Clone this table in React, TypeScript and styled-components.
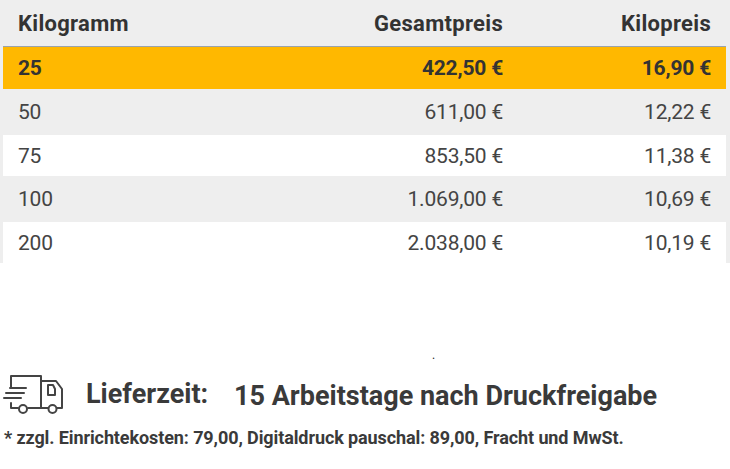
import React from 'react'
import styled, { createGlobalStyle } from 'styled-components'

const GlobalStyle = createGlobalStyle`
    body {
        margin: 0;
        background: #fff;
        font-family: Roboto, "Liberation Sans", sans-serif;
        color: #3b3b3b;
    }
`

const PRICES = [
    { kg: '25', total: '422,50 €', perKg: '16,90 €' },
    { kg: '50', total: '611,00 €', perKg: '12,22 €' },
    { kg: '75', total: '853,50 €', perKg: '11,38 €' },
    { kg: '100', total: '1.069,00 €', perKg: '10,69 €' },
    { kg: '200', total: '2.038,00 €', perKg: '10,19 €' }
]

type Variant = 'head' | 'active' | 'odd' | 'even'

const HEIGHTS: Record<Variant, string> = { head: '46px', active: '42px', odd: '46px', even: '41px' }

const TableWrapper = styled.div`
    background: #eeeeee;
    padding: 0 4px 0 3px;
`

const Row = styled.div<{ $variant: Variant }>`
    display: grid;
    grid-template-columns: 1fr 200px 208px;
    align-items: center;
    padding: 0 15px;
    height: ${p => HEIGHTS[p.$variant]};
    font-size: ${p => (p.$variant === 'head' ? '22px' : '21px')};
    font-weight: ${p => (p.$variant === 'head' || p.$variant === 'active' ? 700 : 400)};
    background: ${p => (p.$variant === 'active' ? '#ffb800' : p.$variant === 'even' ? '#ffffff' : 'transparent')};
    border-bottom: ${p => (p.$variant === 'head' ? '1px solid #9aa3ac' : 'none')};
    color: ${p => (p.$variant === 'head' || p.$variant === 'active' ? '#333' : '#444')};
    letter-spacing: ${p => (p.$variant === 'head' ? '0.3px' : '-0.2px')};
`

const Cell = styled.div<{ $right?: boolean }>`
    text-align: ${p => (p.$right ? 'right' : 'left')};
`

const Spacer = styled.div`
    height: 98px;
    padding-left: 432px;
    display: flex;
    align-items: flex-end;
    font-size: 12px;
    line-height: 12px;
    color: #222;
`

const Delivery = styled.div`
    display: flex;
    align-items: center;
    padding: 12px 0 0 3px;
    font-weight: 700;
    font-size: 27px;
    color: #3a3a3a;
`

const Label = styled.span`
    margin-left: 21px;
    width: 148px;
`

const Value = styled.span`
    padding-top: 4px;
`

const Footnote = styled.div`
    margin: 12px 0 0 4px;
    font-size: 18px;
    font-weight: 700;
    color: #3a3a3a;
    letter-spacing: -0.1px;
`

const TruckIcon = () => (
    <svg width="62" height="42" viewBox="0 7 62 42" fill="none" stroke="#444" strokeWidth="2" strokeLinecap="round" strokeLinejoin="round">
        <path d="M8 22 V10 H38 V42" />
        <path d="M38 15 H53 L59 23 V42 H54" />
        <path d="M45 19 H50 L52 23 V29 H45 Z" />
        <path d="M45 42 H25" />
        <path d="M8 37 V42 H15" />
        <path d="M7 22 H23" />
        <path d="M3 27 H21" />
        <path d="M1 32 H18" />
        <circle cx="20" cy="43" r="4" />
        <circle cx="49.5" cy="43" r="4" />
    </svg>
)

const variantFor = (i: number): Variant => (i === 0 ? 'active' : i % 2 === 1 ? 'odd' : 'even')

const App = () => {
    return (
        <>
            <GlobalStyle />
            <TableWrapper>
                <Row $variant="head">
                    <Cell>Kilogramm</Cell>
                    <Cell $right>Gesamtpreis</Cell>
                    <Cell $right>Kilopreis</Cell>
                </Row>
                {PRICES.map((p, i) => (
                    <Row key={p.kg} $variant={variantFor(i)}>
                        <Cell>{p.kg}</Cell>
                        <Cell $right>{p.total}</Cell>
                        <Cell $right>{p.perKg}</Cell>
                    </Row>
                ))}
            </TableWrapper>
            <Spacer>.</Spacer>
            <Delivery>
                <TruckIcon />
                <Label>Lieferzeit:</Label>
                <Value>15 Arbeitstage nach Druckfreigabe</Value>
            </Delivery>
            <Footnote>* zzgl. Einrichtekosten: 79,00, Digitaldruck pauschal: 89,00, Fracht und MwSt.</Footnote>
        </>
    )
}

export default App
